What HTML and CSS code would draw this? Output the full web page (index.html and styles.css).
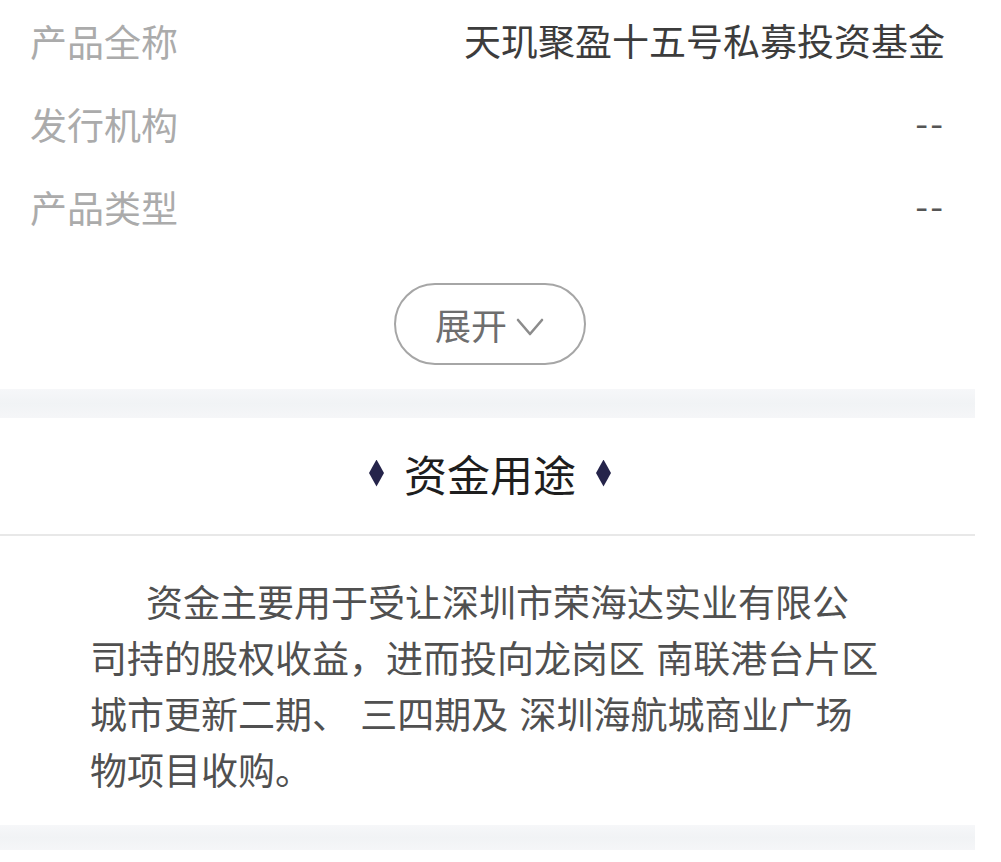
FILE: index.html
```html
<!DOCTYPE html>
<html lang="zh-CN">
<head>
<meta charset="utf-8">
<title>产品详情</title>
<link rel="stylesheet" href="styles.css">
</head>
<body>
<div class="page">
  <section class="info">
    <div class="row">
      <span class="label">产品全称</span>
      <span class="value">天玑聚盈十五号私募投资基金</span>
    </div>
    <div class="row">
      <span class="label">发行机构</span>
      <span class="value dash">--</span>
    </div>
    <div class="row">
      <span class="label">产品类型</span>
      <span class="value dash">--</span>
    </div>
    <div class="toggle-wrap">
      <button class="toggle" type="button">
        <span>展开</span>
        <svg class="chevron" width="28" height="20" viewBox="0 0 28 20" aria-hidden="true">
          <path d="M2 3 L14 17 L26 3" fill="none" stroke="#8c8c8c" stroke-width="2.6" stroke-linecap="round" stroke-linejoin="round"/>
        </svg>
      </button>
    </div>
  </section>

  <div class="band"></div>

  <section class="usage">
    <h2 class="section-title">
      <i class="diamond"></i>
      <span>资金用途</span>
      <i class="diamond"></i>
    </h2>
    <p class="usage-text">资金主要用于受让深圳市荣海达实业有限公司持的股权收益，进而投向龙岗区 南联港台片区城市更新二期、 三四期及 深圳海航城商业广场物项目收购。</p>
  </section>

  <div class="band band-bottom"></div>
</div>
</body>
</html>
```

FILE: styles.css
```css
html, body {
  margin: 0;
  padding: 0;
  background: #ffffff;
}

body {
  font-family: "Microsoft YaHei", "Noto Sans CJK SC", "Noto Sans", sans-serif;
}

.page {
  width: 975px;
  background: #ffffff;
}

/* product info rows */
.info {
  padding: 0 30px;
}

.row {
  height: 83px;
  display: flex;
  align-items: center;
  justify-content: space-between;
}

.label {
  font-size: 37px;
  line-height: 83px;
  color: #ababab;
}

.value {
  font-size: 37px;
  line-height: 83px;
  color: #3c3c3c;
  margin-top: -2px;
}

.value.dash {
  color: #555555;
  letter-spacing: 2px;
  margin-top: -6px;
}

.toggle-wrap {
  display: flex;
  justify-content: center;
  padding-top: 34px;
  padding-left: 4px;
  padding-bottom: 24px;
}

.toggle {
  width: 192px;
  height: 82px;
  border: 2px solid #a6a6a6;
  border-radius: 41px;
  background: #ffffff;
  display: flex;
  align-items: center;
  justify-content: center;
  gap: 9px;
  padding: 0;
  font-family: inherit;
  font-size: 36px;
  color: #6e6e6e;
  cursor: pointer;
}

.toggle span {
  line-height: 40px;
}

.chevron {
  display: block;
  margin-top: 6px;
}

/* grey separator strip */
.band {
  height: 29px;
  background: linear-gradient(#f6f7f9, #f1f3f5 50%, #f5f6f8);
}

.band-bottom {
  height: 25px;
}

/* fund usage section */
.usage {
  padding-bottom: 28px;
}

.section-title {
  margin: 0;
  height: 118px;
  padding-bottom: 6px;
  box-sizing: border-box;
  display: flex;
  align-items: center;
  justify-content: center;
  gap: 20px;
  font-size: 43px;
  font-weight: normal;
  line-height: 112px;
  color: #1e1e1e;
  border-bottom: 2px solid #e8e8e8;
  padding-left: 5px;
}

.diamond {
  display: block;
  width: 15px;
  height: 27px;
  background: #25244a;
  clip-path: polygon(50% 0, 100% 50%, 50% 100%, 0 50%);
}

.usage-text {
  margin: 0;
  padding: 37px 0 0 90px;
  width: 790px;
  font-size: 37px;
  line-height: 56px;
  color: #505050;
  text-indent: 56px;
  word-spacing: 3px;
}
```
